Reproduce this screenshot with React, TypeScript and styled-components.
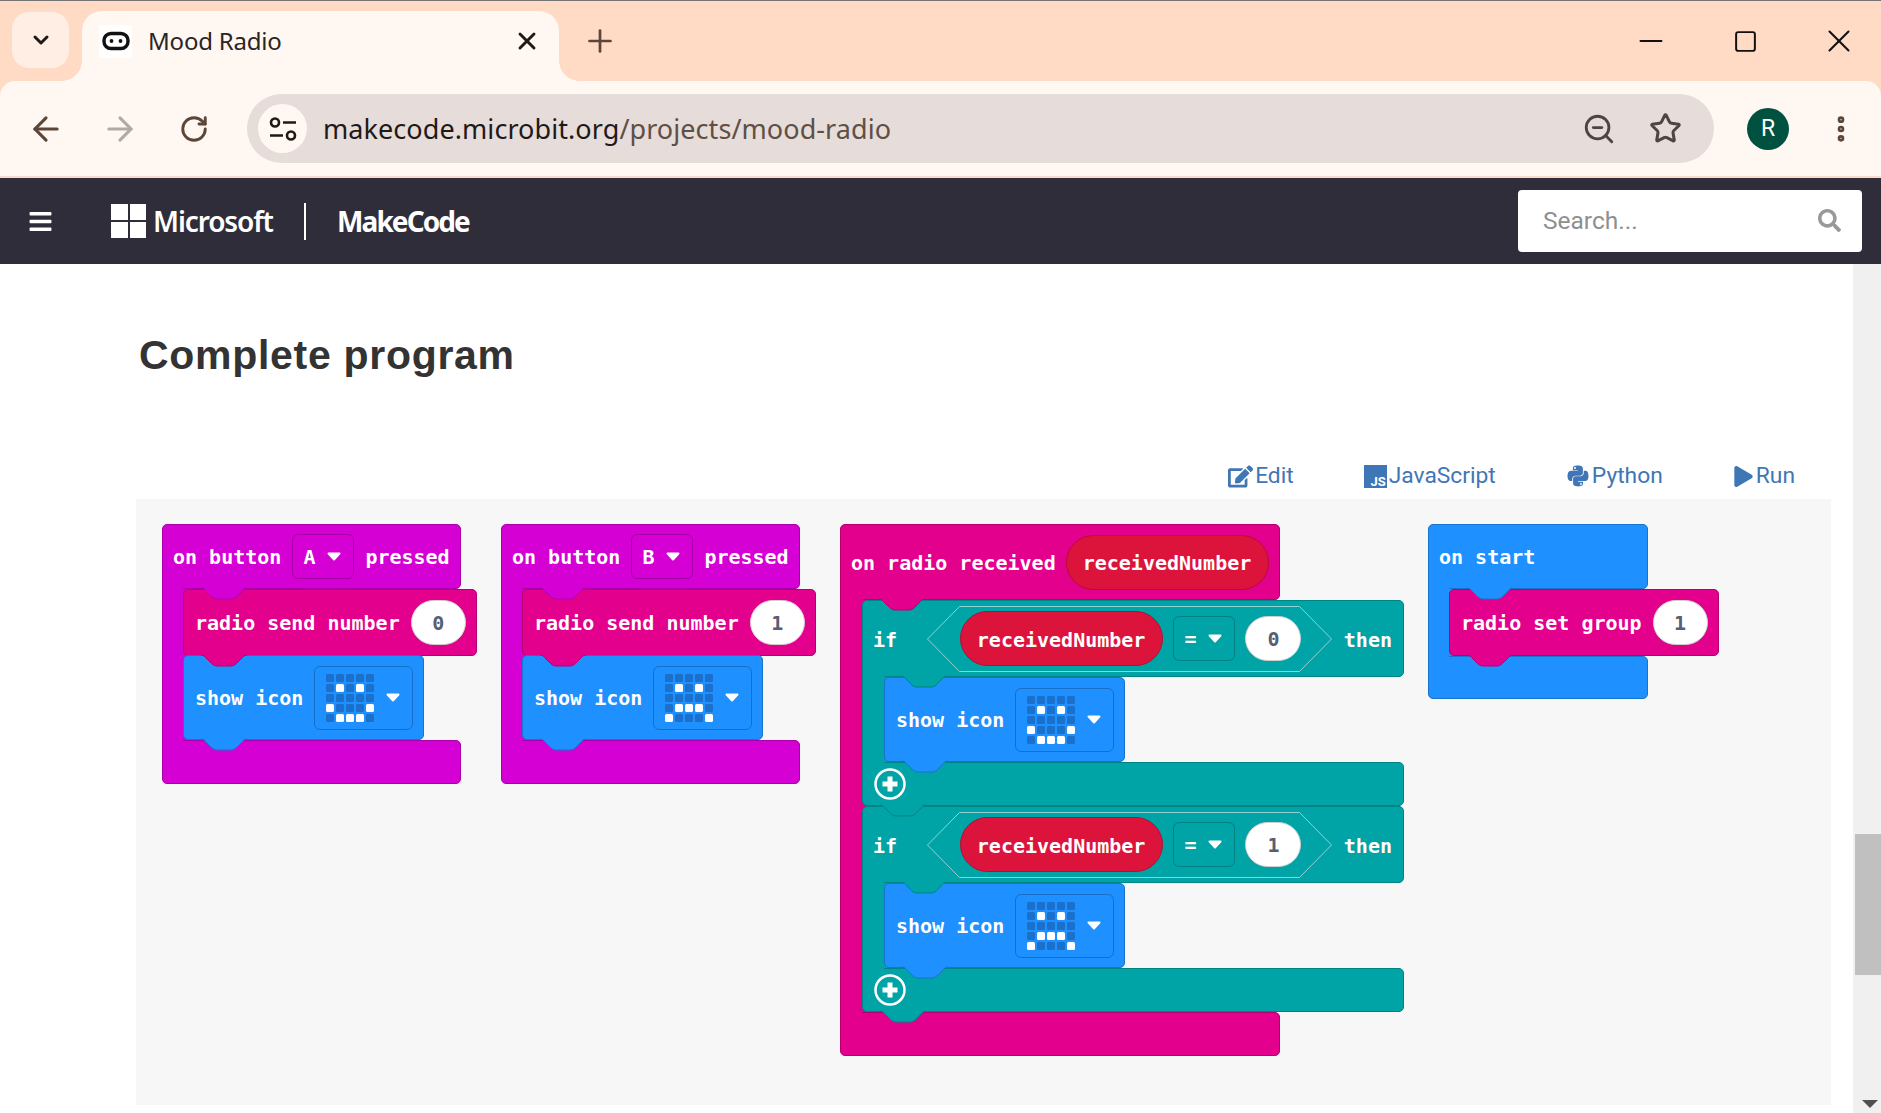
import React from "react";
import styled, { createGlobalStyle } from "styled-components";
import { ArrowLeft, ArrowRight, ChevronDown, EllipsisVertical, Minus, Plus, RotateCw, Square, Star, X, ZoomOut } from "lucide-react";
import { FaBars, FaEdit, FaPlay, FaPython, FaSearch } from "react-icons/fa";

const Global = createGlobalStyle`
  html, body { margin: 0; padding: 0; background: #fff; }
  #root { width: 1881px; height: 1113px; overflow: hidden; }
  * { box-sizing: border-box; }
`;

const Page = styled.div`
  width: 1881px; height: 1113px; display: flex; flex-direction: column;
  background: #fff; overflow: hidden; font-family: "Noto Sans", sans-serif;
`;

/* ---------- browser chrome ---------- */
const TabStrip = styled.div`
  height: 81px; flex: none; display: flex; align-items: flex-end;
  background: #ffdbc5; border-top: 1px solid #757575; padding-left: 12px; position: relative; z-index: 2;
`;
const TabList = styled.button`
  width: 57px; height: 56px; margin-bottom: 13px; border: 0; padding: 0;
  border-radius: 17px; background: #ffeee4; color: #1f1a17;
  display: flex; align-items: center; justify-content: center;
`;
const BrowserTab = styled.div`
  width: 477px; height: 70px; margin-left: 13px; position: relative;
  background: #fff7f2; border-radius: 20px 20px 0 0;
  display: flex; align-items: center; padding: 0 18px 10px 17px; color: #1f1a17;
  &::before, &::after { content: ""; position: absolute; bottom: 0; width: 20px; height: 20px; }
  &::before { left: -20px; background: radial-gradient(circle at 0 0, transparent 19.5px, #fff7f2 20px); }
  &::after { right: -20px; background: radial-gradient(circle at 100% 0, transparent 19.5px, #fff7f2 20px); }
`;
const Favicon = styled.span`
  width: 33px; height: 33px; background: #fff; flex: none; display: flex; align-items: center; justify-content: center;
`;
const TabTitle = styled.span`
  margin-left: 16px; font-size: 24px; line-height: 32px; flex: 1; letter-spacing: -0.2px; color: #2b2522;
`;
const NewTab = styled.span`
  width: 40px; margin: 0 0 22px 21px; display: flex; justify-content: center; color: #5b4638;
`;
const WindowControls = styled.div`
  margin-left: auto; margin-right: -5px; display: flex; align-self: stretch;
`;
const WindowButton = styled.span`
  width: 94px; height: 80px; display: flex; align-items: center; justify-content: center; color: #111;
`;
const Toolbar = styled.div`
  height: 97px; flex: none; background: #fff7f2; border-radius: 15px 15px 0 0;
  border-bottom: 2px solid #fbdccb; display: flex; align-items: center; padding-left: 9px;
  box-shadow: 0 -15px 0 #ffdbc5;
`;
const NavSlot = styled.span<{ $color: string }>`
  width: 74px; display: flex; justify-content: center; color: ${(p) => p.$color};
`;
const Omnibox = styled.div`
  width: 1467px; height: 69px; margin-left: 16px; border-radius: 35px; background: #e6dcd9;
  display: flex; align-items: center; padding: 0 16px 0 11px;
`;
const SiteChip = styled.span`
  width: 49px; height: 49px; border-radius: 50%; background: #fff7f2; flex: none;
  display: flex; align-items: center; justify-content: center;
`;
const Url = styled.span`
  margin-left: 16px; font-size: 27px; line-height: 36px; color: #1f1a17; letter-spacing: 0.07px; white-space: pre;
  span { color: #5f4f45; }
`;
const OmniIcon = styled.span<{ $first?: boolean }>`
  width: 66px; display: flex; justify-content: center; color: #4e4541;
  ${(p) => (p.$first ? "margin-left: auto;" : "")}
`;
const Avatar = styled.span`
  width: 42px; height: 42px; margin-left: 33px; border-radius: 50%; background: #005140; color: #fff;
  font-size: 23px; font-family: Roboto, sans-serif; display: flex; align-items: center; justify-content: center; flex: none;
`;
const KebabSlot = styled.span`
  width: 60px; margin-left: 22px; display: flex; justify-content: center; color: #5b4638;
`;

/* ---------- MakeCode header ---------- */
const Nav = styled.header`
  height: 86px; flex: none; background: #302d3b; display: flex; align-items: center; color: #fff; padding: 0 19px 0 29px;
`;
const Hamburger = styled.span`
  width: 23px; display: flex; justify-content: center;
`;
const MsLogo = styled.span`
  width: 35px; height: 34px; margin-left: 59px; display: grid; grid-template-columns: 1fr 1fr; grid-template-rows: 1fr 1fr; gap: 2px; flex: none;
  i { background: #fff; display: block; }
`;
const MsWord = styled.span`
  margin-left: 7px; width: 120px; font-size: 28px; font-weight: 600; letter-spacing: -1.1px; white-space: nowrap;
`;
const Divider = styled.span`
  width: 2px; height: 37px; margin-left: 31px; background: #fff; flex: none;
`;
const Product = styled.span`
  margin-left: 31px; font-size: 28px; font-weight: 700; letter-spacing: -1.9px;
`;
const SearchBox = styled.div`
  margin-left: auto; width: 344px; height: 62px; background: #fff; border-radius: 4px;
  display: flex; align-items: center; justify-content: space-between; padding: 0 21px 2px 25px;
  color: #8f8f8f; font-family: Roboto, sans-serif; font-size: 24.5px;
`;

/* ---------- page ---------- */
const Main = styled.main`
  flex: 1; min-height: 0; display: flex;
`;
const Content = styled.div`
  width: 1853px; padding: 61px 22px 0 136px;
`;
const Heading = styled.h2`
  margin: 0 0 0 3px; height: 60px; line-height: 60px; font-family: "Liberation Sans", Arial, sans-serif;
  font-size: 41px; font-weight: 700; color: #333; letter-spacing: 0.7px;
`;
const Actions = styled.div`
  margin-top: 71px; height: 43px; display: flex; justify-content: flex-end; align-items: flex-start; gap: 70px;
  padding-right: 36px; color: #3f76b5; font-family: Roboto, sans-serif; font-size: 22.8px;
`;
const Action = styled.span`
  display: flex; align-items: center; gap: 2px; height: 40px; line-height: 40px;
`;
const JsBadge = styled.span`
  width: 23px; height: 23px; background: #3f76b5; color: #fff; font-size: 13px; font-weight: 700;
  display: flex; align-items: flex-end; justify-content: flex-end; line-height: 13px; padding-right: 1px;
`;
const Workspace = styled.section`
  height: 606px; background: #f7f7f7; padding: 25px 26px; display: flex; align-items: flex-start; gap: 24px;
`;
const ScrollTrack = styled.div`
  width: 28px; background: #f0f0f0; position: relative; padding: 570px 0 0 2px;
`;
const ScrollThumb = styled.div`
  height: 141px; background: #c0c0c0;
`;
const ScrollArrow = styled.span`
  position: absolute; right: 3px; bottom: 5px; width: 0; height: 0;
  border-left: 8px solid transparent; border-right: 8px solid transparent; border-top: 8px solid #505050;
`;

/* ---------- blocks ---------- */
type Tone = { fill: string; edge: string };
const INPUT: Tone = { fill: "#d400d4", edge: "#aa00aa" };
const RADIO: Tone = { fill: "#e3008c", edge: "#b60070" };
const BASIC: Tone = { fill: "#1e90ff", edge: "#1873cc" };
const LOGIC: Tone = { fill: "#00a4a6", edge: "#008385" };

const HEAD = "5px 5px 5px 0";
const FOOT = "0 5px 5px 5px";

const CBlock = styled.div`
  flex: none; display: flex; flex-direction: column; align-items: flex-start;
`;
const Row = styled.div<{ $tone: Tone; $h: number; $w?: number; $pl?: number; $pr?: number; $gap?: number; $radius?: string; $mt?: number }>`
  position: relative; flex: none; display: flex; align-items: center;
  height: ${(p) => p.$h}px;
  margin-top: ${(p) => p.$mt ?? 0}px;
  ${(p) => (p.$w ? `width: ${p.$w}px;` : "")}
  padding: 0 ${(p) => p.$pr ?? 11}px 0 ${(p) => p.$pl ?? 11}px;
  gap: ${(p) => p.$gap ?? 11}px;
  background: ${(p) => p.$tone.fill};
  border: 1px solid ${(p) => p.$tone.edge};
  border-radius: ${(p) => p.$radius ?? "5px"};
  color: #fff; font: 700 20px/24px "DejaVu Sans Mono", "Liberation Mono", monospace; white-space: pre;
`;
const Label = styled.span<{ $w?: number; $ml?: number }>`
  padding-top: 2px;
  ${(p) => (p.$w ? `width: ${p.$w}px;` : "")}
  ${(p) => (p.$ml ? `margin-left: ${p.$ml}px;` : "")}
`;
const Body = styled.div`
  display: flex; align-items: stretch;
`;
const Spine = styled.div<{ $tone: Tone; $w: number }>`
  position: relative; z-index: 1; width: ${(p) => p.$w}px; margin: -1px 0; flex: none;
  background: ${(p) => p.$tone.fill}; border-left: 1px solid ${(p) => p.$tone.edge};
  &::after { content: ""; position: absolute; left: 100%; top: 1px; bottom: 1px; width: 6px; background: ${(p) => p.$tone.fill}; }
`;
const Stack = styled.div`
  position: relative; z-index: 2; display: flex; flex-direction: column; align-items: flex-start;
`;
const TabSvg = styled.svg<{ $left: number }>`
  position: absolute; top: 100%; left: ${(p) => p.$left}px; z-index: 3; width: 46px; height: 12px; overflow: visible;
`;
const Field = styled.span<{ $w: number; $h?: number }>`
  width: ${(p) => p.$w}px; height: ${(p) => p.$h ?? 45}px; flex: none; display: flex; align-items: center; justify-content: space-between;
  padding: 0 12px 0 10px; border: 1px solid rgba(0, 0, 0, 0.22); border-radius: 6px;
`;
const Oval = styled.span<{ $w: number }>`
  width: ${(p) => p.$w}px; height: 45px; flex: none; border-radius: 23px; background: #fff; border: 1px solid #cfcfcf;
  color: #575e75; display: flex; align-items: center; justify-content: center;
`;
const VarPill = styled.span`
  height: 55px; padding: 2px 17px 0 16px; flex: none; border-radius: 28px; background: #dc143c; border: 1px solid #b01030;
  display: flex; align-items: center;
`;
const Hex = styled.span`
  position: relative; width: 405px; height: 66px; flex: none; display: flex; align-items: center; gap: 10px; padding: 0 32px 0 33px;
  > span { position: relative; }
`;
const HexOutline = styled.svg`
  position: absolute; inset: 0; width: 100%; height: 100%;
`;
const LedGrid = styled.span`
  display: grid; grid-template-columns: repeat(5, 8px); grid-auto-rows: 8px; gap: 2px; margin-left: 1px;
`;
const Led = styled.i<{ $on: boolean }>`
  display: block; border-radius: 1.5px; background: ${(p) => (p.$on ? "#fff" : "#1a70cb")};
`;
const AddButton = styled.svg`
  width: 32px; height: 32px; flex: none;
`;

const Tab = ({ tone, left }: { tone: Tone; left: number }) => (
  <TabSvg $left={left} viewBox="0 0 46 12" aria-hidden>
    <path d="M0 -1V0c3 0 4 2 6 4l3 3c2 2 4 4 7 4h14c3 0 5-2 7-4l3-3c2-2 3-4 6-4V-1z" fill={tone.fill} />
    <path d="M0 0c3 0 4 2 6 4l3 3c2 2 4 4 7 4h14c3 0 5-2 7-4l3-3c2-2 3-4 6-4" fill="none" stroke={tone.edge} strokeWidth="1" />
  </TabSvg>
);

const Caret = () => (
  <svg width="14" height="9" viewBox="0 0 14 9" aria-hidden style={{ flex: "none" }}>
    <path d="M1.5 1.5h11L7 7.5z" fill="#fff" stroke="#fff" strokeWidth="2" strokeLinejoin="round" />
  </svg>
);

const SMILE = ["00000", "01010", "00000", "10001", "01110"];
const FROWN = ["00000", "01010", "00000", "01110", "10001"];

const ShowIcon = ({ leds, mt }: { leds: string[]; mt?: number }) => (
  <Row $tone={BASIC} $h={85} $w={241} $gap={11} $pr={10} $mt={mt}>
    show icon
    <Field $w={99} $h={64}>
      <LedGrid>
        {leds.join("").split("").map((c, i) => (
          <Led key={i} $on={c === "1"} />
        ))}
      </LedGrid>
      <Caret />
    </Field>
    <Tab tone={BASIC} left={17} />
  </Row>
);

const RadioRow = ({ label, value, w }: { label: string; value: string; w: number }) => (
  <Row $tone={RADIO} $h={67} $w={w}>
    {label}
    <Oval $w={55}>{value}</Oval>
    <Tab tone={RADIO} left={17} />
  </Row>
);

const ButtonHat = ({ btn, value, leds }: { btn: string; value: string; leds: string[] }) => (
  <CBlock>
    <Row $tone={INPUT} $h={65} $w={299} $pl={10} $radius={HEAD}>
      on button
      <Field $w={62}>
        {btn}
        <Caret />
      </Field>
      pressed
      <Tab tone={INPUT} left={38} />
    </Row>
    <Body>
      <Spine $tone={INPUT} $w={21} />
      <Stack>
        <RadioRow label="radio send number" value={value} w={294} />
        <ShowIcon leds={leds} mt={-1} />
      </Stack>
    </Body>
    <Row $tone={INPUT} $h={44} $w={299} $radius={FOOT} />
  </CBlock>
);

const IfBlock = ({ value, leds }: { value: string; leds: string[] }) => (
  <CBlock>
    <Row $tone={LOGIC} $h={77} $w={542} $gap={0} $pl={10} $radius={HEAD}>
      <Label $w={55}>if</Label>
      <Hex>
        <HexOutline viewBox="0 0 405 66" aria-hidden>
          <path d="M32.5.5h340l32 32.5-32 32.5h-340L.5 33z" fill="none" stroke="#8fd2d3" strokeWidth="1" />
        </HexOutline>
        <VarPill>receivedNumber</VarPill>
        <Field $w={62}>
          =
          <Caret />
        </Field>
        <Oval $w={56}>{value}</Oval>
      </Hex>
      <Label $ml={12}>then</Label>
      <Tab tone={LOGIC} left={38} />
    </Row>
    <Body>
      <Spine $tone={LOGIC} $w={22} />
      <Stack>
        <ShowIcon leds={leds} />
      </Stack>
    </Body>
    <Row $tone={LOGIC} $h={44} $w={542} $pl={11} $radius={FOOT}>
      <AddButton viewBox="0 0 32 32" aria-hidden>
        <circle cx="16" cy="16" r="14.5" fill="none" stroke="#fff" strokeWidth="2.5" />
        <path d="M16 8.5v15M8.5 16h15" stroke="#fff" strokeWidth="5" />
      </AddButton>
      <Tab tone={LOGIC} left={17} />
    </Row>
  </CBlock>
);

const App = () => (
  <Page>
    <Global />
    <TabStrip>
      <TabList>
        <ChevronDown size={24} strokeWidth={3} />
      </TabList>
      <BrowserTab>
        <Favicon>
          <svg width="30" height="20" viewBox="0 0 30 20" aria-hidden>
            <rect x="3" y="2.5" width="24" height="15" rx="7" fill="#fff" stroke="#111" strokeWidth="3.4" />
            <circle cx="10.5" cy="10" r="1.9" fill="#111" />
            <circle cx="19.5" cy="10" r="1.9" fill="#111" />
          </svg>
        </Favicon>
        <TabTitle>Mood Radio</TabTitle>
        <X size={28} strokeWidth={2.5} />
      </BrowserTab>
      <NewTab>
        <Plus size={36} strokeWidth={1.8} />
      </NewTab>
      <WindowControls>
        <WindowButton>
          <Minus size={36} strokeWidth={1.3} />
        </WindowButton>
        <WindowButton>
          <Square size={25} strokeWidth={1.9} />
        </WindowButton>
        <WindowButton>
          <X size={38} strokeWidth={1.3} />
        </WindowButton>
      </WindowControls>
    </TabStrip>
    <Toolbar>
      <NavSlot $color="#5b4638">
        <ArrowLeft size={38} strokeWidth={2} />
      </NavSlot>
      <NavSlot $color="#b3a9a3">
        <ArrowRight size={38} strokeWidth={2} />
      </NavSlot>
      <NavSlot $color="#5b4638">
        <RotateCw size={30} strokeWidth={2.3} />
      </NavSlot>
      <Omnibox>
        <SiteChip>
          <svg width="28" height="26" viewBox="0 0 28 26" aria-hidden fill="none" stroke="#1f1a17" strokeWidth="2.6">
            <circle cx="6" cy="6.5" r="4" />
            <path d="M14 6.5h13M1 19.5h13" />
            <circle cx="22" cy="19.5" r="4" />
          </svg>
        </SiteChip>
        <Url>
          makecode.microbit.org<span>/projects/mood-radio</span>
        </Url>
        <OmniIcon $first>
          <ZoomOut size={34} strokeWidth={2} />
        </OmniIcon>
        <OmniIcon>
          <Star size={33} strokeWidth={2.2} />
        </OmniIcon>
      </Omnibox>
      <Avatar>R</Avatar>
      <KebabSlot>
        <EllipsisVertical size={32} strokeWidth={3} />
      </KebabSlot>
    </Toolbar>
    <Nav>
      <Hamburger>
        <FaBars size={25} />
      </Hamburger>
      <MsLogo>
        <i />
        <i />
        <i />
        <i />
      </MsLogo>
      <MsWord>Microsoft</MsWord>
      <Divider />
      <Product>MakeCode</Product>
      <SearchBox>
        Search...
        <FaSearch size={23} color="#999" />
      </SearchBox>
    </Nav>
    <Main>
      <Content>
        <Heading>Complete program</Heading>
        <Actions>
          <Action>
            <FaEdit size={25} />
            Edit
          </Action>
          <Action>
            <JsBadge>JS</JsBadge>
            JavaScript
          </Action>
          <Action>
            <FaPython size={24} />
            Python
          </Action>
          <Action>
            <FaPlay size={21} />
            Run
          </Action>
        </Actions>
        <Workspace>
          <ButtonHat btn="A" value="0" leds={SMILE} />
          <ButtonHat btn="B" value="1" leds={FROWN} />
          <CBlock>
            <Row $tone={RADIO} $h={76} $w={440} $gap={10} $pl={10} $radius={HEAD}>
              <Label>on radio received</Label>
              <VarPill>receivedNumber</VarPill>
              <Tab tone={RADIO} left={38} />
            </Row>
            <Body>
              <Spine $tone={RADIO} $w={22} />
              <Stack>
                <IfBlock value="0" leds={SMILE} />
                <IfBlock value="1" leds={FROWN} />
              </Stack>
            </Body>
            <Row $tone={RADIO} $h={44} $w={440} $radius={FOOT} />
          </CBlock>
          <CBlock>
            <Row $tone={BASIC} $h={65} $w={220} $pl={10} $radius={HEAD}>
              on start
              <Tab tone={BASIC} left={38} />
            </Row>
            <Body>
              <Spine $tone={BASIC} $w={21} />
              <Stack>
                <RadioRow label="radio set group" value="1" w={270} />
              </Stack>
            </Body>
            <Row $tone={BASIC} $h={43} $w={220} $radius={FOOT} />
          </CBlock>
        </Workspace>
      </Content>
      <ScrollTrack>
        <ScrollThumb />
        <ScrollArrow />
      </ScrollTrack>
    </Main>
  </Page>
);

export default App;
